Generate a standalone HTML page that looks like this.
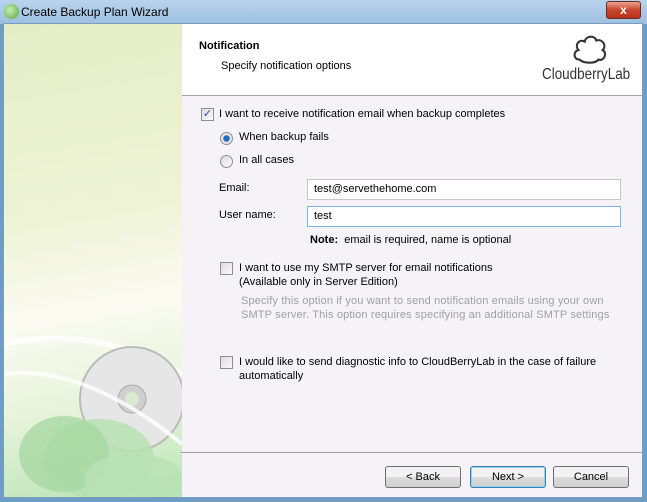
<!DOCTYPE html>
<html><head><meta charset="utf-8"><style>
*{margin:0;padding:0;box-sizing:border-box}
body{width:647px;height:502px;overflow:hidden;font-family:"Liberation Sans",sans-serif;font-size:11px;color:#000;background:#6d9cc4;position:relative}
.a{position:absolute}
.title{left:0;top:0;width:647px;height:24px;background:linear-gradient(#b9d3ec,#9dbfe0);}
.body{left:3px;top:23px;width:640px;height:475px;background:#f5f3f7;border:1px solid #7a9cbd}
.left{left:0;top:0;width:178px;height:473px;background:linear-gradient(170deg,#e4edc6 0%,#eef3d6 40%,#fbfbf2 60%,#e5f3d9 80%,#b9e3b6 100%)}
.hdr{left:178px;top:0;width:460px;height:72px;background:#fff;border-bottom:1px solid #a8a8a8}
.cb{width:13px;height:13px;border:1px solid #8f8f8f;background:linear-gradient(135deg,#dcdcdc,#fafafa)}
.rb{width:13px;height:13px;border:1px solid #8f8f8f;border-radius:50%;background:linear-gradient(135deg,#dcdcdc,#fafafa)}
.inp{height:21px;border:1px solid #abadb3;background:#fff;padding:2px 6px;line-height:15px}
.btn{height:22px;border:1px solid #707070;border-radius:3px;background:linear-gradient(#f2f2f2 50%,#dcdcdc 50%,#cfcfcf);text-align:center;line-height:20px}
.gray{color:#a0a0a0;letter-spacing:.15px}
</style></head><body>
<div class="a title"></div>
<div class="a" style="left:4px;top:4px;width:15px;height:15px;border-radius:50%;background:radial-gradient(circle at 40% 40%,#c9f0b0,#4fa53a)"></div>
<div class="a" style="left:21px;top:5px;font-size:12px">Create Backup Plan Wizard</div>
<div class="a" style="left:606px;top:1px;width:35px;height:18px;border:1px solid #6b2a20;border-radius:3px;background:linear-gradient(#e9a593,#c9452b 50%,#b8321b);color:#fff;font-weight:bold;text-align:center;line-height:16px;font-size:12px">x</div>
<div class="a body">
 <div class="a left">
  <svg class="a" style="left:0;top:280px" width="178" height="193" viewBox="0 0 178 193">
   <path d="M0 40 Q90 20 178 70" stroke="#fff" stroke-width="6" fill="none" opacity=".7"/>
   <circle cx="128" cy="95" r="52" fill="#e6e6e6" stroke="#bbb" stroke-width="2"/>
   <circle cx="128" cy="95" r="14" fill="#cfcfcf" stroke="#aaa"/>
   <circle cx="128" cy="95" r="7" fill="#d8ead0"/>
   <ellipse cx="95" cy="155" rx="55" ry="40" fill="#b6e0b0" opacity=".85"/>
   <ellipse cx="60" cy="150" rx="45" ry="38" fill="#a8d8a2" opacity=".8"/>
   <ellipse cx="130" cy="175" rx="50" ry="25" fill="#b9e2b4" opacity=".85"/>
   <path d="M0 70 Q80 60 178 140" stroke="#fff" stroke-width="4" fill="none" opacity=".8"/>
  </svg>
 </div>
 <div class="a hdr">
  <div class="a" style="left:17px;top:16px;font-weight:bold">Notification</div>
  <div class="a" style="left:39px;top:36px">Specify notification options</div>
  <svg class="a" style="left:389px;top:8px" width="38" height="34" viewBox="0 0 36 32"><path d="M8 26 C2 26 2 18 7 17 C3 12 8 6 13 9 C14 3 23 3 24 8 C30 6 34 13 30 17 C35 20 31 28 26 26 C23 30 12 30 8 26Z" fill="none" stroke="#333" stroke-width="2"/></svg>
  <div class="a" style="left:360px;top:42px;font-size:16px;color:#333;transform:scaleX(.84);transform-origin:left">CloudberryLab</div>
 </div>
</div>
<div class="a cb" style="left:201px;top:108px;font-size:11px;line-height:11px;color:#2a4e9a;text-align:center">✓</div>
<div class="a" style="left:219px;top:108px">I want to receive notification email when backup completes</div>
<div class="a rb" style="left:220px;top:132px;background:radial-gradient(circle,#1f6fbf 0 3px,#e8e8e8 3.5px)"></div>
<div class="a" style="left:239px;top:131px">When backup fails</div>
<div class="a rb" style="left:220px;top:155px"></div>
<div class="a" style="left:239px;top:154px">In all cases</div>
<div class="a" style="left:219px;top:182px">Email:</div>
<div class="a inp" style="left:307px;top:179px;width:314px;border-color:#c8c8c8">test@servethehome.com</div>
<div class="a" style="left:219px;top:209px">User name:</div>
<div class="a inp" style="left:307px;top:206px;width:314px;border-color:#7eb4ea">test</div>
<div class="a" style="left:310px;top:234px"><b>Note:</b>&nbsp; email is required, name is optional</div>
<div class="a cb" style="left:220px;top:262px"></div>
<div class="a" style="left:239px;top:261px;line-height:14px">I want to use my SMTP server for email notifications<br>(Available only in Server Edition)</div>
<div class="a gray" style="left:241px;top:294px;line-height:14px">Specify this option if you want to send notification emails using your own<br>SMTP server. This option requires specifying an additional SMTP settings</div>
<div class="a cb" style="left:220px;top:356px"></div>
<div class="a" style="left:239px;top:355px;line-height:14px">I would like to send diagnostic info to CloudBerryLab in the case of failure<br>automatically</div>
<div class="a" style="left:181px;top:452px;width:461px;height:1px;background:#a0a0a0"></div>
<div class="a btn" style="left:385px;top:466px;width:76px">&lt; Back</div>
<div class="a btn" style="left:470px;top:466px;width:76px;border-color:#3c7fb1;box-shadow:inset 0 0 0 1px #8fd3f5">Next &gt;</div>
<div class="a btn" style="left:553px;top:466px;width:76px">Cancel</div>
</body></html>
